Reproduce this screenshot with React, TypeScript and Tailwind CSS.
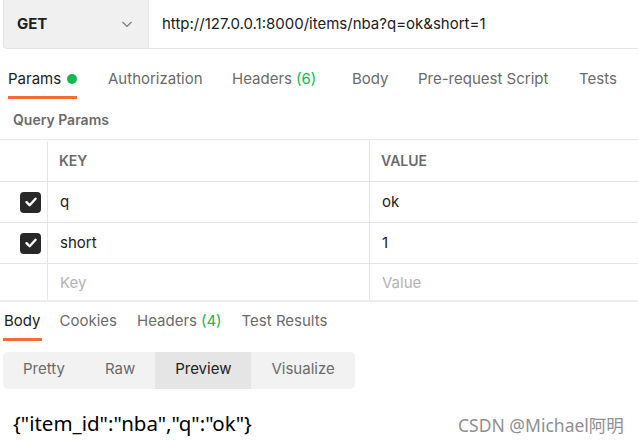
import React from "react";

function ChevronDown() {
  return (
    <svg width="14" height="14" viewBox="0 0 14 14" fill="none">
      <path d="M2.5 5 L7 9.5 L11.5 5" stroke="#7a7a7a" strokeWidth="1.2" />
    </svg>
  );
}

function Check() {
  return (
    <div className="w-[21px] h-[21px] rounded-[4px] bg-[#282828] flex items-center justify-center">
      <svg width="14" height="14" viewBox="0 0 14 14" fill="none">
        <path d="M2.5 7.2 L5.6 10.2 L11.6 3.8" stroke="#ffffff" strokeWidth="2.4" strokeLinecap="round" strokeLinejoin="round" />
      </svg>
    </div>
  );
}

export default function App() {
  const font = { fontFamily: "Inter, 'Noto Sans', sans-serif" };
  return (
    <div className="w-[638px] h-[444px] bg-white overflow-hidden relative text-[15px] text-[#212121]" style={font}>
      {/* Top bar */}
      <div className="flex h-[49px] ml-[3px]">
        <div className="w-[145px] bg-[#f0f0f0] border-l border-b border-[#e3e3e3] rounded-bl-[4px] flex items-center justify-between pl-[13px] pr-[14px]">
          <span className="font-bold text-[15px] text-[#212121]">GET</span>
          <ChevronDown />
        </div>
        <div className="flex-1 border-b border-l border-[#e6e6e6] flex items-center pl-[13px] text-[15px] text-[#212121]">
          http://127.0.0.1:8000/items/nba?q=ok&amp;short=1
        </div>
      </div>

      {/* Request tabs */}
      <div className="flex h-[50px] items-stretch pl-[8px] text-[#6b6b6b]">
        <div className="w-[100px]">
          <div className="inline-flex flex-col h-full">
            <div className="flex items-center h-[47px] pt-[13px] text-[#212121]">
              Params
              <span className="ml-[6px] w-[10px] h-[10px] rounded-full bg-[#0cbb52]" />
            </div>
            <div className="h-[3px] bg-[#f26b3a]" />
          </div>
        </div>
        <div className="w-[124px] flex items-start pt-[19px]">Authorization</div>
        <div className="w-[120px] flex items-start pt-[19px]">
          Headers <span className="ml-[4px] text-[#0cbb52]">(6)</span>
        </div>
        <div className="w-[66px] flex items-start pt-[19px]">Body</div>
        <div className="w-[161px] flex items-start pt-[19px]">Pre-request Script</div>
        <div className="flex items-start pt-[19px]">Tests</div>
      </div>

      {/* Query params label */}
      <div className="h-[40px] flex items-center pl-[13px] font-semibold text-[14px] text-[#6b6b6b]">
        Query Params
      </div>

      {/* Table */}
      <div className="border-t border-[#e6e6e6] border-b-2 border-b-[#ebebeb]">
        <div className="grid grid-cols-[48px_322px_1fr] h-[42px] border-b border-[#e6e6e6]">
          <div className="border-r border-[#e6e6e6] mt-[1px]" />
          <div className="border-r border-[#e6e6e6] flex items-center pl-[11px] font-semibold text-[14px] text-[#6b6b6b]">KEY</div>
          <div className="flex items-center pl-[11px] font-semibold text-[14px] text-[#6b6b6b]">VALUE</div>
        </div>
        <div className="grid grid-cols-[48px_322px_1fr] h-[41px] border-b border-[#e6e6e6]">
          <div className="border-r border-[#e6e6e6] flex items-center justify-end pr-[6px]"><Check /></div>
          <div className="border-r border-[#e6e6e6] flex items-center pl-[12px]">q</div>
          <div className="flex items-center pl-[12px]">ok</div>
        </div>
        <div className="grid grid-cols-[48px_322px_1fr] h-[41px] border-b border-[#e6e6e6]">
          <div className="border-r border-[#e6e6e6] flex items-center justify-end pr-[6px]"><Check /></div>
          <div className="border-r border-[#e6e6e6] flex items-center pl-[12px]">short</div>
          <div className="flex items-center pl-[12px]">1</div>
        </div>
        <div className="grid grid-cols-[48px_322px_1fr] h-[36px]">
          <div className="border-r border-[#e6e6e6]" />
          <div className="border-r border-[#e6e6e6] flex items-center pl-[12px] pt-[2px] text-[#b3b3b3]">Key</div>
          <div className="flex items-center pl-[12px] pt-[2px] text-[#b3b3b3]">Value</div>
        </div>
      </div>

      {/* Response tabs */}
      <div className="flex h-[39px] pl-[3px] text-[#6b6b6b]">
        <div className="inline-flex flex-col">
          <div className="h-[36px] flex items-center pt-[3px] text-[#212121] px-[1px]">Body</div>
          <div className="h-[3px] bg-[#f26b3a]" />
        </div>
        <div className="ml-[18px] h-[36px] flex items-center pt-[3px]">Cookies</div>
        <div className="ml-[20px] h-[36px] flex items-center pt-[3px]">
          Headers <span className="ml-[4px] text-[#0cbb52]">(4)</span>
        </div>
        <div className="ml-[20px] h-[36px] flex items-center pt-[3px]">Test Results</div>
      </div>

      {/* Segmented control */}
      <div className="mt-[11px] ml-[3px] inline-flex h-[37px] bg-[#f2f2f2] rounded-[5px] overflow-hidden text-[#6b6b6b]">
        <div className="px-[20px] flex items-center pb-[2px]">Pretty</div>
        <div className="px-[20px] flex items-center pb-[2px]">Raw</div>
        <div className="px-[20px] flex items-center pb-[2px] bg-[#e5e5e5] text-[#212121]">Preview</div>
        <div className="px-[20px] flex items-center pb-[2px]">Visualize</div>
      </div>

      {/* JSON preview */}
      <div className="mt-[24px] pl-[13px] text-[20.5px] text-black leading-none" style={{ fontFamily: "'Noto Sans', 'Open Sans', sans-serif" }}>
        {'{"item_id":"nba","q":"ok"}'}
      </div>

      {/* Watermark */}
      <div
        className="absolute left-[458px] top-[417px] text-[17.5px] text-[#909090] leading-none"
        style={{ fontFamily: "'Noto Sans', 'Noto Sans CJK SC', sans-serif" }}
      >
        CSDN @Michael阿明
      </div>
    </div>
  );
}
